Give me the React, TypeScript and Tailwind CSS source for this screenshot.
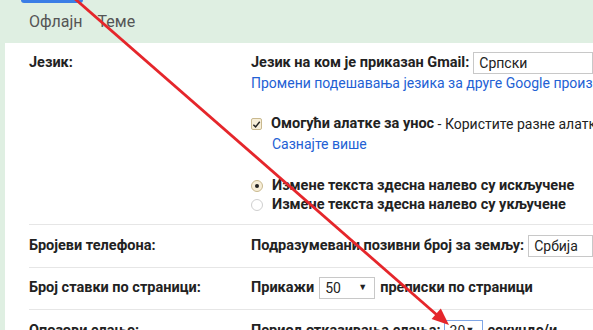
import React from 'react';

// Gmail settings (Serbian) with a red annotation arrow drawn over it.

function Select({ value, width, arrow = false, focus = false }: { value: string; width: string; arrow?: boolean; focus?: boolean }) {
  return (
    <div
      className={`h-[22px] ${width} flex items-center justify-between px-[5px] bg-white border ${
        focus ? 'border-[#7fa6e6]' : 'border-[#c8c8c8]'
      } font-normal text-[14px] text-[#222]`}
    >
      <span>{value}</span>
      {arrow && <span className="text-[9px] mr-[2px]">▼</span>}
    </div>
  );
}

function Row({ label, children, className = '' }: { label: string; children: React.ReactNode; className?: string }) {
  return (
    <div className={`flex border-b border-[#e6e6e6] ${className}`}>
      <div className="w-[222px] shrink-0 font-bold text-[#222] h-[22px] flex items-center">{label}</div>
      <div className="flex-1 min-w-0">{children}</div>
    </div>
  );
}

export default function App() {
  return (
    <div
      className="relative w-[593px] h-[330px] overflow-hidden bg-[#dfefe2] text-[14.5px] text-[#222]"
      style={{ fontFamily: 'Roboto, Arial, sans-serif' }}
    >
      {/* tabs */}
      <div className="relative h-[43px] flex items-center gap-[15px] pl-[29px] text-[16px] text-[#555]">
        <div className="absolute left-[21px] top-0 w-[62px] h-[3px] bg-[#3b7ee6] rounded-b-sm" />
        <span className="mt-[1px]">Офлајн</span>
        <span className="mt-[1px]">Теме</span>
      </div>

      {/* panel */}
      <div className="ml-[5px] bg-white pl-[24px] whitespace-nowrap">
        <Row label="Језик:" className="pt-[9px] pb-[10px]">
          <div className="flex items-center h-[22px]">
            <span className="font-bold mr-[4px]">Језик на ком је приказан Gmail:</span>
            <Select value="Српски" width="w-[160px]" />
          </div>
          <div className="h-[16px] mt-[1px] leading-[16px] text-[14px] text-[#2361d4]">
            Промени подешавања језика за друге Google производе
          </div>
          <div className="flex items-center h-[20px] mt-[23px]">
            <span className="w-[12px] h-[12px] mr-[9px] rounded-[2px] border border-[#c9b98f] bg-[#f7eed8] flex items-center justify-center">
              <svg width="9" height="9" viewBox="0 0 10 10">
                <path d="M1.5 5.2 L4 7.6 L8.6 2" fill="none" stroke="#222" strokeWidth="1.6" />
              </svg>
            </span>
            <span className="font-bold">Омогући алатке за унос</span>
            <span className="text-[14px]">&nbsp;- Користите разне алатке за унос текста</span>
          </div>
          <div className="h-[20px] leading-[20px] pl-[21px] text-[14px] text-[#2361d4]">Сазнајте више</div>
          <div className="flex items-center h-[19px] mt-[22px] font-bold">
            <span className="w-[12px] h-[12px] mr-[9px] rounded-full border border-[#c9b98f] bg-[#f7eed8] flex items-center justify-center">
              <span className="w-[4px] h-[4px] rounded-full bg-[#222]" />
            </span>
            Измене текста здесна налево су искључене
          </div>
          <div className="flex items-center h-[19px] font-bold">
            <span className="w-[12px] h-[12px] mr-[9px] rounded-full border border-[#cfcfcf] bg-white" />
            Измене текста здесна налево су укључене
          </div>
        </Row>

        <Row label="Бројеви телефона:" className="pt-[10px] pb-[10px]">
          <div className="flex items-center h-[22px]">
            <span className="font-bold mr-[4px]">Подразумевани позивни број за земљу:</span>
            <Select value="Србија" width="w-[120px]" />
          </div>
        </Row>

        <Row label="Број ставки по страници:" className="pt-[9px] pb-[10px]">
          <div className="flex items-center h-[22px] font-bold">
            <span className="mr-[5px]">Прикажи</span>
            <Select value="50" width="w-[56px]" arrow />
            <span className="ml-[5px]">преписки по страници</span>
          </div>
        </Row>

        <Row label="Опозови слање:" className="pt-[10px] border-b-0">
          <div className="flex items-center h-[22px] font-bold">
            <span className="mr-[3px]">Период отказивања слања:</span>
            <Select value="30" width="w-[39px]" arrow focus />
            <span className="ml-[5px]">секунде/и</span>
          </div>
        </Row>
      </div>

      {/* annotation arrow */}
      <svg className="absolute inset-0 pointer-events-none" width="593" height="330" viewBox="0 0 593 330">
        <line x1="74" y1="-2" x2="437" y2="315" stroke="#e5262b" strokeWidth="2.8" />
        <polygon points="449,325 431.6,319.1 440.8,308.5" fill="#e5262b" />
      </svg>
    </div>
  );
}
